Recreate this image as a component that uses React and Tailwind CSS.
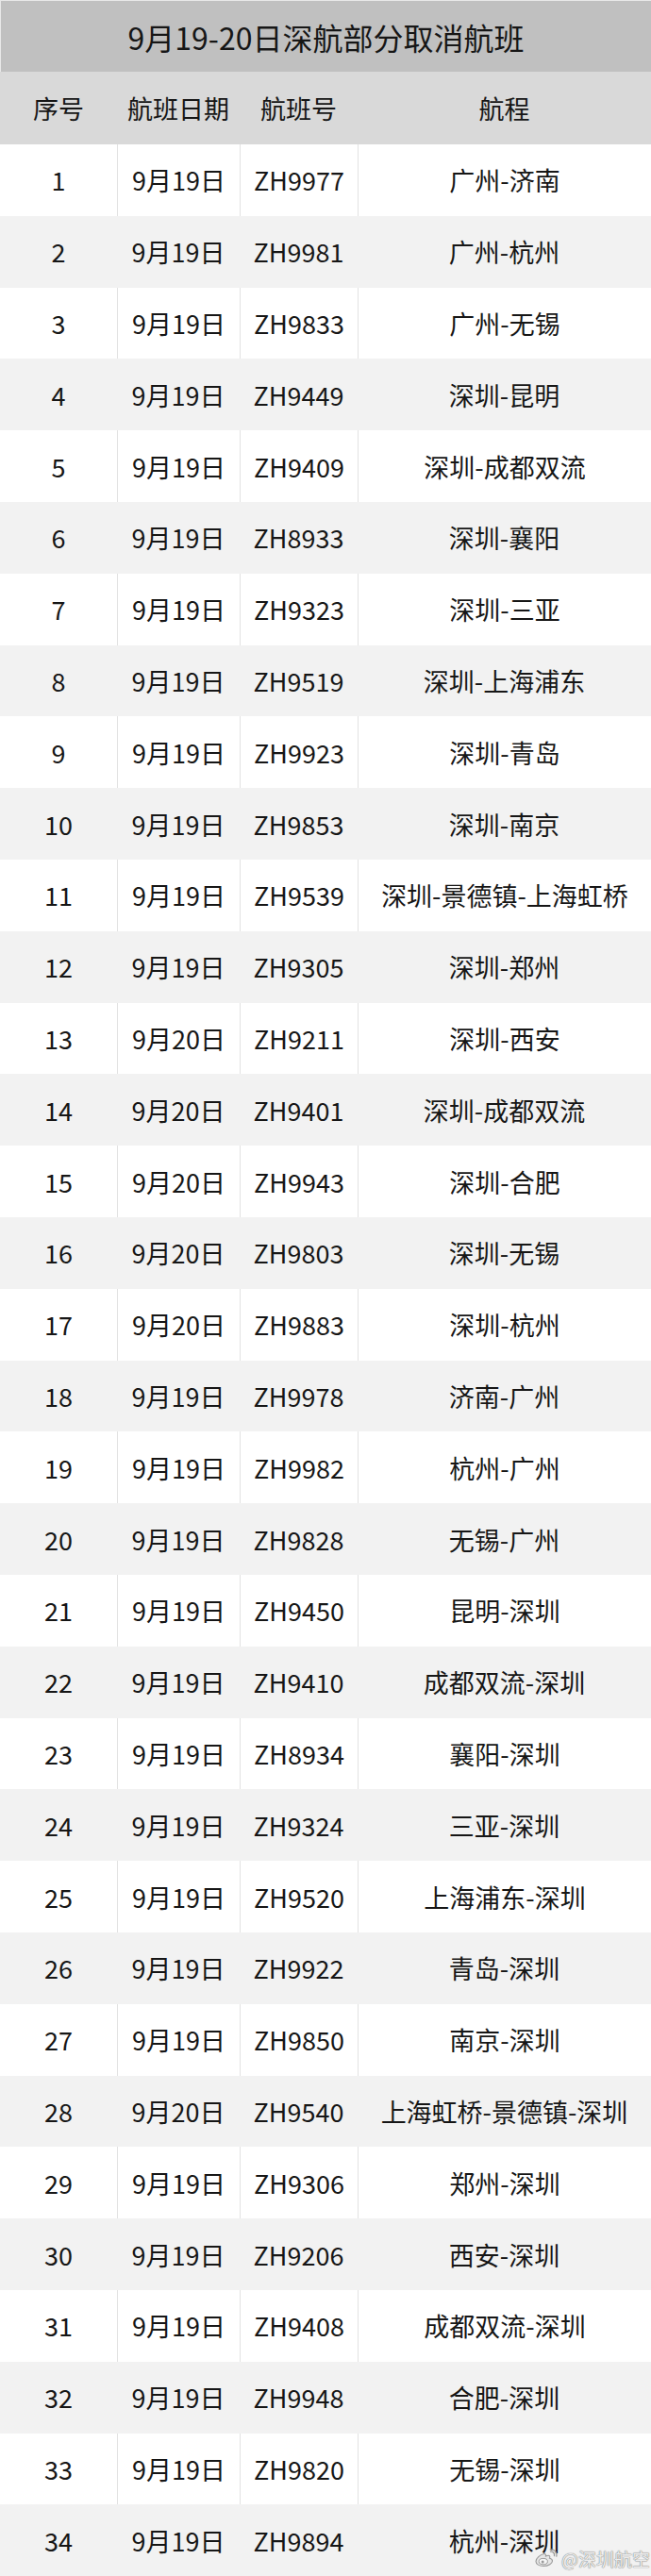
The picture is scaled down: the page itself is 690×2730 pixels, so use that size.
import React from "react";

const rows = [
  ["1", "9月19日", "ZH9977", "广州-济南"],
  ["2", "9月19日", "ZH9981", "广州-杭州"],
  ["3", "9月19日", "ZH9833", "广州-无锡"],
  ["4", "9月19日", "ZH9449", "深圳-昆明"],
  ["5", "9月19日", "ZH9409", "深圳-成都双流"],
  ["6", "9月19日", "ZH8933", "深圳-襄阳"],
  ["7", "9月19日", "ZH9323", "深圳-三亚"],
  ["8", "9月19日", "ZH9519", "深圳-上海浦东"],
  ["9", "9月19日", "ZH9923", "深圳-青岛"],
  ["10", "9月19日", "ZH9853", "深圳-南京"],
  ["11", "9月19日", "ZH9539", "深圳-景德镇-上海虹桥"],
  ["12", "9月19日", "ZH9305", "深圳-郑州"],
  ["13", "9月20日", "ZH9211", "深圳-西安"],
  ["14", "9月20日", "ZH9401", "深圳-成都双流"],
  ["15", "9月20日", "ZH9943", "深圳-合肥"],
  ["16", "9月20日", "ZH9803", "深圳-无锡"],
  ["17", "9月20日", "ZH9883", "深圳-杭州"],
  ["18", "9月19日", "ZH9978", "济南-广州"],
  ["19", "9月19日", "ZH9982", "杭州-广州"],
  ["20", "9月19日", "ZH9828", "无锡-广州"],
  ["21", "9月19日", "ZH9450", "昆明-深圳"],
  ["22", "9月19日", "ZH9410", "成都双流-深圳"],
  ["23", "9月19日", "ZH8934", "襄阳-深圳"],
  ["24", "9月19日", "ZH9324", "三亚-深圳"],
  ["25", "9月19日", "ZH9520", "上海浦东-深圳"],
  ["26", "9月19日", "ZH9922", "青岛-深圳"],
  ["27", "9月19日", "ZH9850", "南京-深圳"],
  ["28", "9月20日", "ZH9540", "上海虹桥-景德镇-深圳"],
  ["29", "9月19日", "ZH9306", "郑州-深圳"],
  ["30", "9月19日", "ZH9206", "西安-深圳"],
  ["31", "9月19日", "ZH9408", "成都双流-深圳"],
  ["32", "9月19日", "ZH9948", "合肥-深圳"],
  ["33", "9月19日", "ZH9820", "无锡-深圳"],
  ["34", "9月19日", "ZH9894", "杭州-深圳"],
];

function WeiboLogo() {
  return (
    <svg width="26" height="20" viewBox="0 0 26 20">
      <path
        d="M10.5 5.5c-4 1-8.5 4.5-8.5 8 0 3 3.5 5 8 5 5.5 0 9.5-3 9.5-5.5 0-2-2-2.6-3-2.8.6-1.6.4-3-1.4-3-.9 0-2 .4-2.6.7.3-1.4-.2-2.6-2-2.4z"
        fill="#e6e6e6"
        stroke="#9a9a9a"
        strokeWidth="1.1"
      />
      <ellipse cx="9.8" cy="13.6" rx="4.6" ry="3.2" fill="#f5f5f5" stroke="#9a9a9a" strokeWidth="1" />
      <circle cx="9.2" cy="14" r="1.5" fill="#9a9a9a" />
      <path d="M17.5 3.2c2.6-.4 4.6 1.8 4 4.4" fill="none" stroke="#9a9a9a" strokeWidth="1.3" strokeLinecap="round" />
      <path d="M17.2 0.9c4.2-.7 7.6 3 6.6 7.2" fill="none" stroke="#9a9a9a" strokeWidth="1.3" strokeLinecap="round" />
    </svg>
  );
}

export default function App() {
  return (
    <div className="relative w-[690px] h-[2730px] flex flex-col text-[#161616] font-['Noto_Sans_CJK_SC','Noto_Sans',sans-serif] leading-none">
      <div className="h-[76px] shrink-0 bg-[#c0c0c0] flex items-center justify-center text-[32px] border-t border-l border-[#e8e8e8]">
        9月19-20日深航部分取消航班
      </div>
      <div className="h-[77px] shrink-0 bg-[#d9d9d9] grid grid-cols-[124px_130px_125px_1fr] items-center text-[27px]">
        <div className="text-center">序号</div>
        <div className="text-center">航班日期</div>
        <div className="text-center">航班号</div>
        <div className="text-center">航程</div>
      </div>
      <div className="flex-1 flex flex-col">
        {rows.map((r, i) => {
          const white = i % 2 === 0;
          const line = white ? "border-l border-[#e2e2e2]" : "";
          return (
            <div
              key={r[0]}
              className={
                "flex-1 basis-0 grid grid-cols-[124px_130px_125px_1fr] text-[27px] " +
                (white ? "bg-white" : "bg-[#f2f2f2]")
              }
            >
              <div className="flex items-center justify-center">{r[0]}</div>
              <div className={"flex items-center justify-center " + line}>{r[1]}</div>
              <div className={"flex items-center justify-center " + line}>{r[2]}</div>
              <div className={"flex items-center justify-center whitespace-nowrap " + line}>{r[3]}</div>
            </div>
          );
        })}
      </div>
      <div className="absolute left-[566px] top-[2701px] flex items-center gap-[3px]">
        <WeiboLogo />
        <span className="text-[19px] text-[#ececec] [text-shadow:0_0_1px_#7a7a7a,0_0_1px_#7a7a7a]">
          @深圳航空
        </span>
      </div>
    </div>
  );
}
